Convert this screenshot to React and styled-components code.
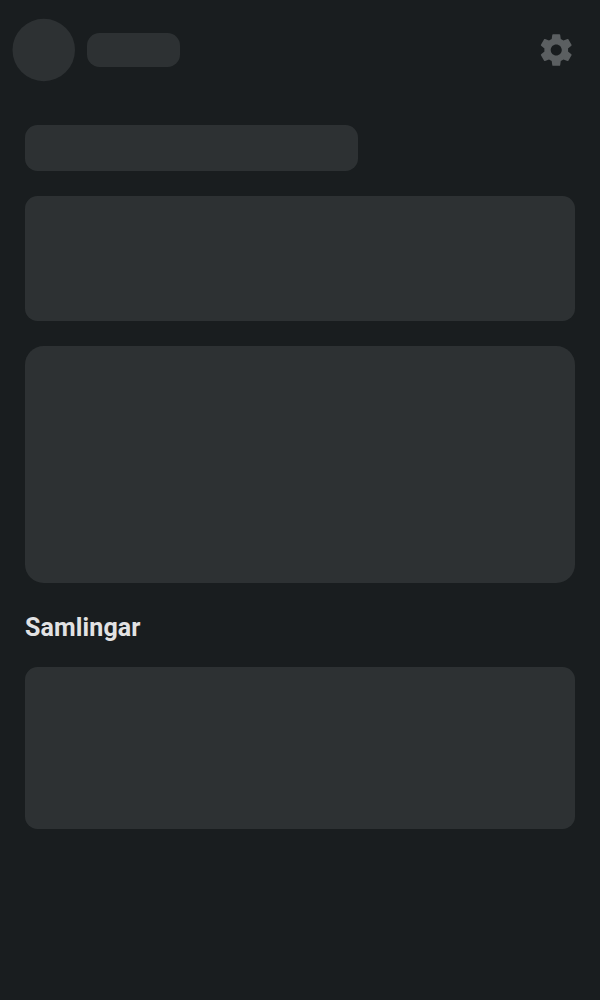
import React from "react";
import styled, { createGlobalStyle } from "styled-components";

const GlobalStyle = createGlobalStyle`
  * { box-sizing: border-box; }
  body { margin: 0; background: #191d1f; font-family: Roboto, sans-serif; }
`;

const Screen = styled.div`
  min-height: 1000px;
  background: #191d1f;
`;

const Header = styled.header`
  display: flex;
  align-items: center;
  height: 100px;
  padding: 0 25px 0 12px;
`;

const Skeleton = styled.div`
  width: ${({ $width }) => $width || "100%"};
  height: ${({ $height }) => $height};
  border-radius: ${({ $radius }) => $radius || "12.5px"};
  background: #2d3133;
`;

const Avatar = styled.svg`
  width: 64px;
  height: 64px;
  fill: #2d3133;
`;

const Name = styled(Skeleton)`
  margin-left: 11px;
`;

const SettingsButton = styled.button`
  display: flex;
  margin: 0 0 0 auto;
  padding: 0;
  border: 0;
  background: none;
  color: #5b5f61;
`;

const GearIcon = styled.svg`
  width: 38px;
  height: 38px;
  fill: currentColor;
`;

const Content = styled.main`
  display: flex;
  flex-direction: column;
  gap: 25px;
  padding: 25px 25px 0;
`;

const SectionTitle = styled.h2`
  margin: 0;
  padding-top: 5px;
  color: #e2e2e3;
  font-size: 25px;
  font-weight: 700;
  line-height: 29px;
  letter-spacing: 0.12px;
`;

export default function App() {
  return (
    <Screen>
      <GlobalStyle />
      <Header>
        <Avatar viewBox="0 0 64 64"><circle cx="31.75" cy="32" r="31.25" /></Avatar>
        <Name $width="93px" $height="34px" />
        <SettingsButton aria-label="Inställningar">
          <GearIcon viewBox="-0.15 0 24 24">
            <path d="M19.43 12.98c.04-.32.07-.64.07-.98s-.03-.66-.07-.98l2.11-1.65c.19-.15.24-.42.12-.64l-2-3.46c-.12-.22-.39-.3-.61-.22l-2.49 1c-.52-.4-1.08-.73-1.69-.98l-.38-2.65C14.46 2.18 14.25 2 14 2h-4c-.25 0-.46.18-.49.42l-.38 2.65c-.61.25-1.17.59-1.69.98l-2.49-1c-.23-.09-.49 0-.61.22l-2 3.46c-.13.22-.07.49.12.64l2.11 1.65c-.04.32-.07.65-.07.98s.03.66.07.98l-2.11 1.65c-.19.15-.24.42-.12.64l2 3.46c.12.22.39.3.61.22l2.49-1c.52.4 1.08.73 1.69.98l.38 2.65c.03.24.24.42.49.42h4c.25 0 .46-.18.49-.42l.38-2.65c.61-.25 1.17-.59 1.69-.98l2.49 1c.23.09.49 0 .61-.22l2-3.46c.12-.22.07-.49-.12-.64l-2.11-1.65zM12 15.5c-1.93 0-3.5-1.57-3.5-3.5s1.57-3.5 3.5-3.5 3.5 1.57 3.5 3.5-1.57 3.5-3.5 3.5z" />
          </GearIcon>
        </SettingsButton>
      </Header>
      <Content>
        <Skeleton $width="333px" $height="46px" />
        <Skeleton $height="125px" />
        <Skeleton $height="237.3px" $radius="18.75px" />
        <SectionTitle>Samlingar</SectionTitle>
        <Skeleton $height="162px" />
      </Content>
    </Screen>
  );
}
